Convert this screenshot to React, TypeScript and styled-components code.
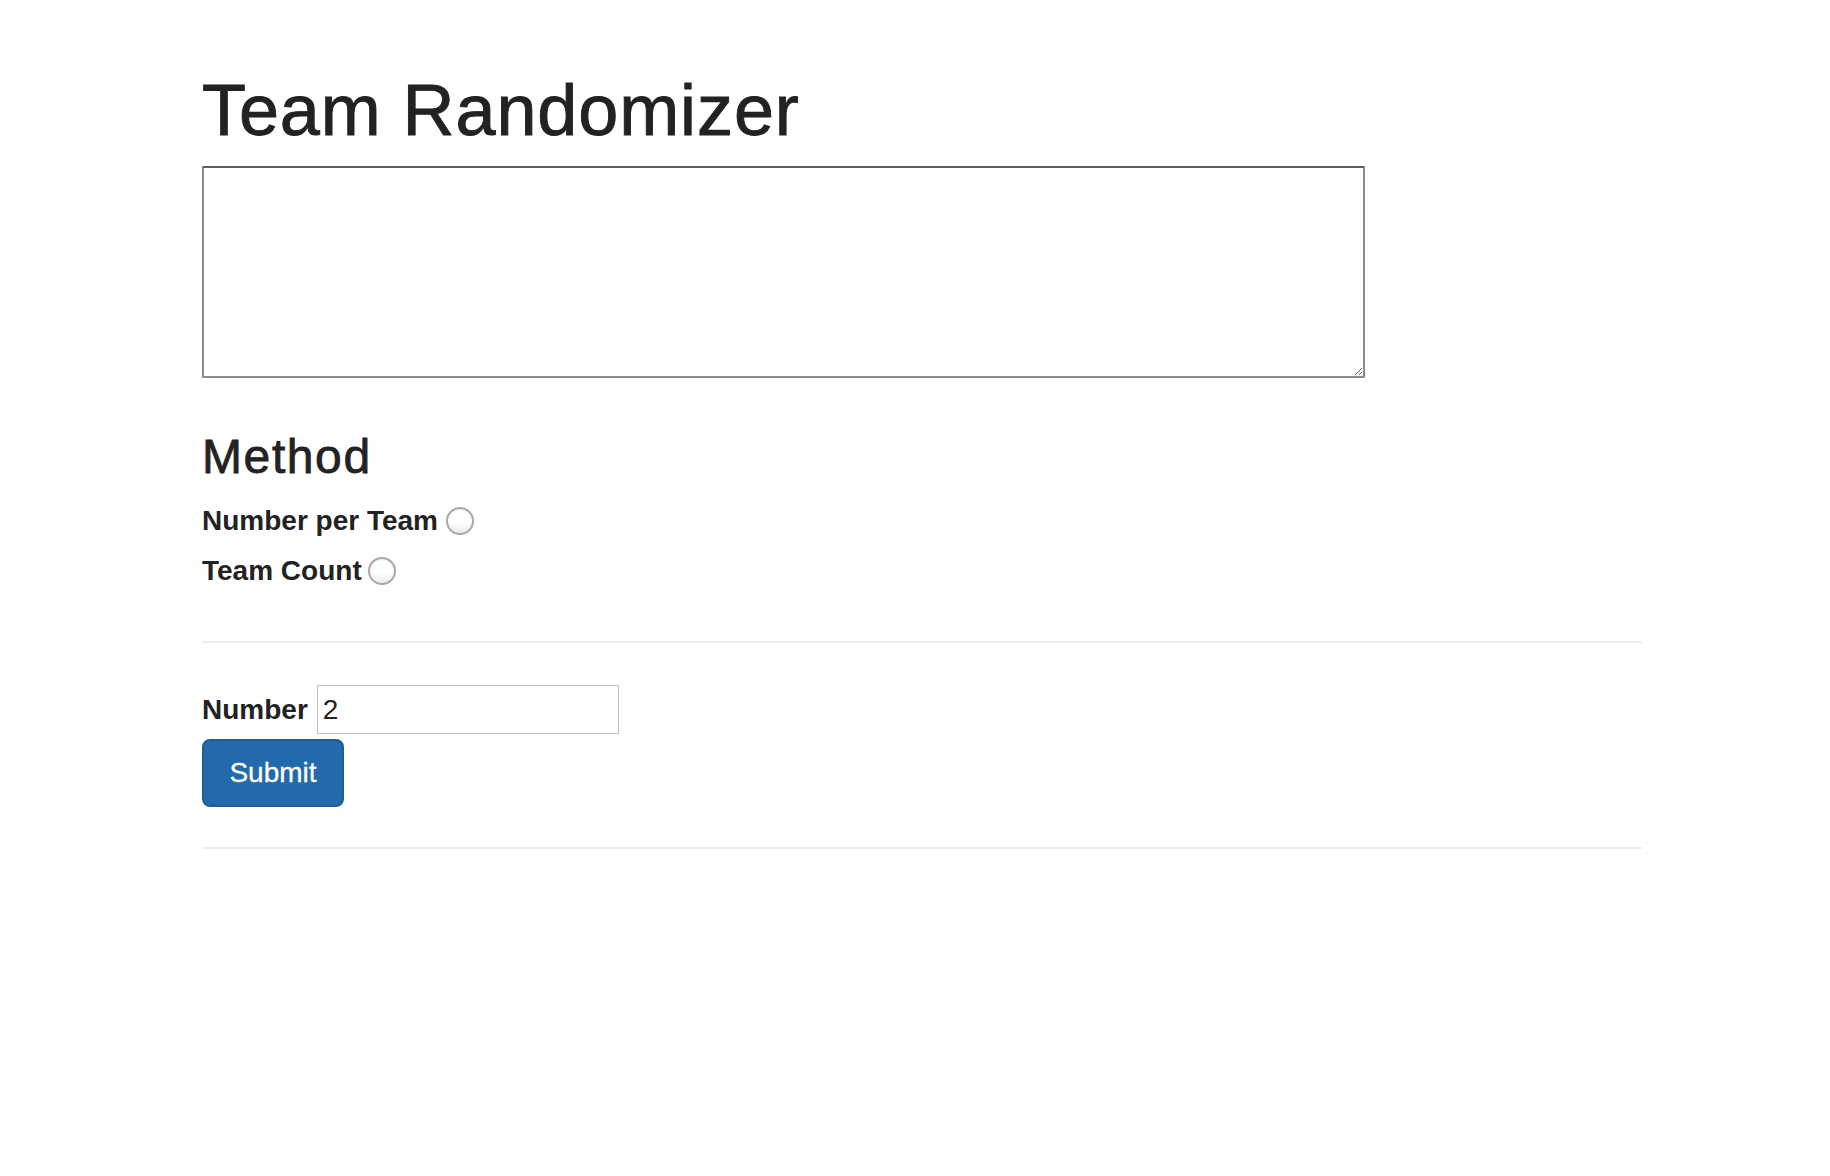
import React from "react";
import styled, { createGlobalStyle } from "styled-components";

const GlobalStyle = createGlobalStyle`
  html, body {
    margin: 0;
    padding: 0;
    background: #ffffff;
  }
  body {
    font-family: "Liberation Sans", Arial, Helvetica, sans-serif;
    color: #222222;
  }
  * { box-sizing: border-box; }
`;

const Container = styled.div`
  width: 1440px;
  margin-left: 202px;
  padding-top: 70px;
  display: flex;
  flex-direction: column;
  align-items: flex-start;
`;

const Title = styled.h1`
  margin: 0 0 16px 0;
  font-size: 72px;
  line-height: 80px;
  font-weight: 400;
  letter-spacing: 0.9px;
  -webkit-text-stroke: 0.9px #222222;
  color: #222222;
`;

const NamesArea = styled.textarea`
  display: block;
  width: 1163px;
  height: 212px;
  margin: 0;
  border: 2px solid #8c8c8c;
  border-top-color: #5e5e5e;
  border-radius: 0;
  background: #ffffff;
  font-family: "Liberation Sans", Arial, sans-serif;
  font-size: 28px;
  padding: 4px;
  outline: none;
`;

const SectionTitle = styled.h3`
  margin: 52px 0 18px 0;
  font-size: 48px;
  line-height: 53px;
  font-weight: 400;
  letter-spacing: 1.6px;
  -webkit-text-stroke: 0.8px #222222;
  color: #222222;
`;

const OptionRow = styled.label<{ $gap: number }>`
  display: flex;
  align-items: center;
  height: 40px;
  margin-bottom: 10px;
  font-size: 28px;
  line-height: 40px;
  font-weight: 700;
  color: #222222;
  gap: ${(p) => p.$gap}px;
`;

const Radio = styled.input.attrs({ type: "radio" })`
  appearance: none;
  -webkit-appearance: none;
  margin: 0;
  width: 28px;
  height: 28px;
  border-radius: 50%;
  border: 2px solid #a9a9a9;
  background: linear-gradient(180deg, #ffffff 0%, #ffffff 55%, #ececec 100%);
  box-shadow: inset 0 1px 1px rgba(0, 0, 0, 0.08);
`;

const Divider = styled.hr<{ $top: number }>`
  width: 1440px;
  height: 0;
  margin: ${(p) => p.$top}px 0 0 0;
  border: 0;
  border-top: 2px solid #eeeeee;
`;

const FieldRow = styled.div`
  display: flex;
  align-items: center;
  height: 49px;
  margin-top: 42px;
`;

const FieldLabel = styled.label`
  font-size: 28px;
  line-height: 40px;
  font-weight: 700;
  color: #222222;
  margin-right: 9px;
`;

const NumberInput = styled.input`
  width: 302px;
  height: 49px;
  margin: 0;
  padding: 0 0 0 5px;
  border: 1px solid #c2c2c2;
  border-radius: 0;
  font-family: "Liberation Sans", Arial, sans-serif;
  font-size: 28px;
  color: #222222;
  outline: none;
`;

const SubmitButton = styled.button`
  margin-top: 5px;
  width: 142px;
  height: 68px;
  padding: 0;
  border: 2px solid #1f5d99;
  border-radius: 8px;
  background: #236aab;
  color: #ffffff;
  font-family: "Liberation Sans", Arial, sans-serif;
  font-size: 28px;
  line-height: 40px;
  font-weight: 400;
  -webkit-text-stroke: 0.3px #ffffff;
  cursor: pointer;
`;

export default function App() {
  return (
    <>
      <GlobalStyle />
      <Container>
        <Title>Team Randomizer</Title>
        <NamesArea />
        <SectionTitle>Method</SectionTitle>
        <OptionRow $gap={8}>
          Number per Team
          <Radio name="method" value="per" />
        </OptionRow>
        <OptionRow $gap={6}>
          Team Count
          <Radio name="method" value="count" />
        </OptionRow>
        <Divider $top={40} />
        <FieldRow>
          <FieldLabel htmlFor="num">Number</FieldLabel>
          <NumberInput id="num" type="text" defaultValue="2" />
        </FieldRow>
        <SubmitButton type="button">Submit</SubmitButton>
        <Divider $top={40} />
      </Container>
    </>
  );
}
